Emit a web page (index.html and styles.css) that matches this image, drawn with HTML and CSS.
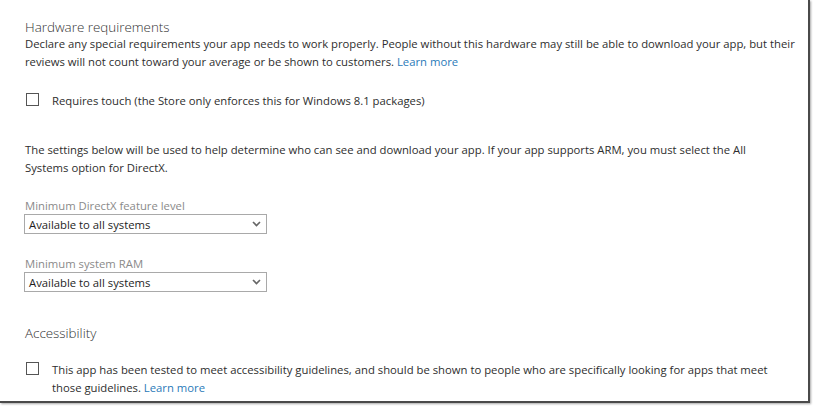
FILE: index.html
```html
<!DOCTYPE html>
<html>
<head>
<meta charset="utf-8">
<link rel="stylesheet" href="styles.css">
</head>
<body>
<div class="frame">
  <div class="content">
    <h2 class="heading">Hardware requirements</h2>
    <p class="para">Declare any special requirements your app needs to work properly. People without this hardware may still be able to download your app, but their reviews will not count toward your average or be shown to customers. <a class="link">Learn more</a></p>
    <label class="check-row touch">
      <span class="box"></span>
      <span class="check-text">Requires touch (the Store only enforces this for Windows 8.1 packages)</span>
    </label>
    <p class="para settings">The settings below will be used to help determine who can see and download your app. If your app supports ARM, you must select the All Systems option for DirectX.</p>
    <div class="field">
      <div class="field-label">Minimum DirectX feature level</div>
      <div class="select"><span>Available to all systems</span><svg class="chev" width="9" height="6" viewBox="0 0 9 6"><path d="M1 1 L4.5 4.5 L8 1" fill="none" stroke="#666" stroke-width="1.6"/></svg></div>
    </div>
    <div class="field">
      <div class="field-label">Minimum system RAM</div>
      <div class="select"><span>Available to all systems</span><svg class="chev" width="9" height="6" viewBox="0 0 9 6"><path d="M1 1 L4.5 4.5 L8 1" fill="none" stroke="#666" stroke-width="1.6"/></svg></div>
    </div>
    <h2 class="heading access">Accessibility</h2>
    <label class="check-row acc">
      <span class="box"></span>
      <span class="check-text">This app has been tested to meet accessibility guidelines, and should be shown to people who are specifically looking for apps that meet those guidelines. <a class="link">Learn more</a></span>
    </label>
  </div>
</div>
</body>
</html>
```

FILE: styles.css
```css
html, body {
  margin: 0;
  padding: 0;
  background: #ffffff;
}
body {
  width: 813px;
  height: 406px;
  overflow: hidden;
  font-family: "Open Sans", "Noto Sans", sans-serif;
  color: #2e2e2e;
}
.frame {
  width: 810px;
  height: 403px;
  box-sizing: border-box;
  border-right: 2px solid #4a4a4a;
  border-bottom: 2px solid #4a4a4a;
  box-shadow: 1px 1px 2px rgba(0,0,0,0.35);
  background: #fff;
  overflow: hidden;
}
.content {
  padding: 19px 0 0 25px;
  width: 778px;
}
.heading {
  margin: 0;
  font-size: 13.4px;
  font-weight: 300;
  line-height: 16px;
  color: #333;
}
.para {
  margin: 0;
  font-size: 11.3px;
  line-height: 18px;
}
.link {
  color: #2a7ab9;
  text-decoration: none;
}
.check-row {
  display: flex;
  align-items: flex-start;
  gap: 13px;
  font-size: 11.3px;
  line-height: 18px;
}
.touch {
  margin-top: 21px;
}
.box {
  flex: none;
  width: 11px;
  height: 11px;
  border: 1px solid #555;
  margin: 1px 0 0 1px;
  background: #fff;
}
.settings {
  margin-top: 31px;
  width: 738px;
}
.field {
  margin-top: 21px;
}
.field + .field {
  margin-top: 22px;
}
.field-label {
  font-size: 11.3px;
  line-height: 16px;
  color: #8a8a8a;
}
.select {
  width: 232px;
  height: 18px;
  border: 1px solid #a9a9a9;
  display: flex;
  align-items: center;
  justify-content: space-between;
  padding: 0 5px 0 4px;
  box-sizing: content-box;
  margin-left: -1px;
  font-size: 11.3px;
  color: #1e1e1e;
}
.chev {
  flex: none;
}
.access {
  margin-top: 33px;
}
.acc {
  margin-top: 20px;
  width: 755px;
}
```
